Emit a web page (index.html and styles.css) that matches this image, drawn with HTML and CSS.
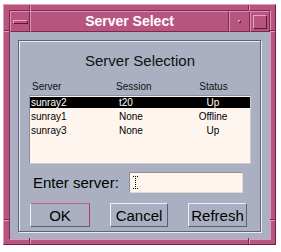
FILE: index.html
```html
<!DOCTYPE html>
<html lang="en">
<head>
    <meta charset="UTF-8">
    <title>Server Select</title>
    <link rel="stylesheet" href="styles.css">
</head>
<body>
    <!-- Janela -->
    <div class="window">
        <span class="mark mark-top mark-l"></span>
        <span class="mark mark-top mark-r"></span>
        <span class="mark mark-bottom mark-l"></span>
        <span class="mark mark-bottom mark-r"></span>
        <span class="mark mark-side mark-upper side-l"></span>
        <span class="mark mark-side mark-upper side-r"></span>
        <span class="mark mark-side mark-lower side-l"></span>
        <span class="mark mark-side mark-lower side-r"></span>

        <div class="inner">
            <div class="titlebar">
                <div class="tb-btn menu-btn"><span class="menu-icon"></span></div>
                <div class="tb-title">Server Select</div>
                <div class="tb-btn min-btn"><span class="min-icon"></span></div>
                <div class="tb-btn max-btn"><span class="max-icon"></span></div>
            </div>

            <div class="client">
                <div class="panel">
                    <div class="panel-title">Server Selection</div>

                    <div class="cols">
                        <span>Server</span>
                        <span>Session</span>
                        <span class="status">Status</span>
                    </div>

                    <div class="list">
                        <div class="row selected">
                            <span>sunray2</span>
                            <span class="session">t20</span>
                            <span class="status">Up</span>
                        </div>
                        <div class="row">
                            <span>sunray1</span>
                            <span class="session">None</span>
                            <span class="status">Offline</span>
                        </div>
                        <div class="row">
                            <span>sunray3</span>
                            <span class="session">None</span>
                            <span class="status">Up</span>
                        </div>
                    </div>

                    <div class="entry">
                        <span class="entry-label">Enter server:</span>
                        <div class="field">
                            <svg class="caret" width="5" height="13" viewBox="0 0 5 13">
                                <path d="M0 0.5h5M0 12.5h5M2.5 0v13" stroke="#000" stroke-width="1" stroke-dasharray="1 1" fill="none"/>
                            </svg>
                        </div>
                    </div>

                    <div class="buttons">
                        <button class="btn btn-ok">OK</button>
                        <button class="btn btn-cancel">Cancel</button>
                        <button class="btn btn-refresh">Refresh</button>
                    </div>
                </div>
            </div>
        </div>
    </div>
</body>
</html>
```

FILE: styles.css
```css
body {
    margin: 0;
    background: #fff;
    font-family: 'Liberation Sans', Arial, sans-serif;
}

.window {
    position: relative;
    margin: 4px 0 0 3px;
    width: 273px;
    height: 241px;
    box-sizing: border-box;
    padding: 5px 4px 4px 5px;
    background: #b8557f;
    border-top: 1px solid #e09abb;
    border-left: 1px solid #e09abb;
    border-bottom: 1px solid #6c1f45;
    border-right: 1px solid #6c1f45;
}

/* marcas de canto da moldura */
.mark {
    position: absolute;
}

.mark-top, .mark-bottom {
    width: 1px;
    height: 6px;
    border-left: 1px solid #7a2a52;
    background: #e09abb;
}

.mark-top { top: 0; }
.mark-bottom { bottom: 0; }
.mark-l { left: 25px; }
.mark-r { left: 244px; }

.mark-side {
    width: 5px;
    height: 1px;
    border-top: 1px solid #7a2a52;
    background: #e09abb;
}

.side-l { left: 0; }
.side-r { right: 0; }
.mark-upper { top: 25px; }
.mark-lower { top: 214px; }

.inner {
    border-top: 1px solid #7a2a52;
    border-left: 1px solid #7a2a52;
    border-bottom: 1px solid #e09abb;
    border-right: 1px solid #e09abb;
}

.titlebar {
    display: flex;
    height: 21px;
}

.tb-btn, .tb-title {
    box-sizing: border-box;
    border-top: 1px solid #dc8fb0;
    border-left: 1px solid #dc8fb0;
    border-bottom: 1px solid #7a2a52;
    border-right: 1px solid #7a2a52;
    background: #b8557f;
}

.tb-btn {
    display: flex;
    justify-content: center;
    align-items: center;
}

.menu-btn { width: 20px; }
.min-btn { width: 21px; }
.max-btn { width: 20px; }

.tb-title {
    flex: 1;
    color: #fff;
    font-size: 14px;
    font-weight: bold;
    text-align: center;
    line-height: 19px;
}

.menu-icon {
    width: 13px;
    height: 2px;
    background: #b8557f;
    border-top: 1px solid #e6a2c0;
    border-left: 1px solid #e6a2c0;
    border-bottom: 1px solid #5e1838;
    border-right: 1px solid #5e1838;
}

.min-icon {
    width: 1px;
    height: 1px;
    background: #b8557f;
    border-top: 1px solid #e6a2c0;
    border-left: 1px solid #e6a2c0;
    border-bottom: 1px solid #5e1838;
    border-right: 1px solid #5e1838;
}

.max-icon {
    width: 12px;
    height: 12px;
    background: #b8557f;
    border-top: 1px solid #e6a2c0;
    border-left: 1px solid #e6a2c0;
    border-bottom: 1px solid #5e1838;
    border-right: 1px solid #5e1838;
}

.client {
    height: 207px;
    box-sizing: border-box;
    padding: 8px 9px 7px 8px;
    background: #aab0c1;
}

.panel {
    height: 192px;
    box-sizing: border-box;
    padding: 11px 9px 4px 10px;
    border: 1px solid #5f6576;
    box-shadow: inset 1px 1px 0 #e8ebf2, 1px 1px 0 #e8ebf2;
}

.panel-title {
    font-size: 15px;
    line-height: 18px;
    text-align: center;
    color: #111;
}

.cols, .row {
    display: grid;
    grid-template-columns: 85px 60px 1fr;
    font-size: 10px;
}

.cols {
    margin-top: 11px;
    height: 12px;
    line-height: 12px;
    padding-left: 2px;
    color: #111;
}

.cols span:first-child {
    padding-left: 1px;
}

.status {
    text-align: center;
}

.list {
    margin-top: 2px;
    height: 69px;
    box-sizing: border-box;
    padding-top: 1px;
    display: flex;
    flex-direction: column;
    gap: 3px;
    background: #fff5ef;
    border-top: 1px solid #8c909c;
    border-left: 1px solid #8c909c;
    border-bottom: 1px solid #d6cbc2;
    border-right: 1px solid #d6cbc2;
}

.row {
    height: 11px;
    line-height: 11px;
    padding-left: 1px;
    color: #000;
}

.row .session {
    padding-left: 3px;
}

.row.selected {
    background: #000;
    color: #fff;
}

.entry {
    margin-top: 8px;
    display: flex;
    align-items: center;
}

.entry-label {
    padding-left: 4px;
    font-size: 15px;
    color: #000;
}

.field {
    margin-left: auto;
    margin-right: 8px;
    width: 114px;
    height: 21px;
    box-sizing: border-box;
    padding: 3px 0 0 3px;
    background: #fff5ef;
    border-top: 1px solid #8f8f8f;
    border-left: 1px solid #8f8f8f;
    border-bottom: 1px solid #e2d8cf;
    border-right: 1px solid #e2d8cf;
}

.caret {
    display: block;
}

.buttons {
    margin-top: 10px;
    padding-left: 1px;
    display: flex;
    gap: 20px;
}

.btn {
    height: 24px;
    padding: 0;
    font-family: 'Liberation Sans', Arial, sans-serif;
    font-size: 15px;
    color: #000;
    background: #aab0c1;
    border-top: 1px solid #edf0f6;
    border-left: 1px solid #edf0f6;
    border-bottom: 1px solid #5b6070;
    border-right: 1px solid #5b6070;
}

.btn-ok {
    width: 60px;
    border-top-color: #c8618e;
    border-right-color: #a8406e;
}

.btn-cancel { width: 58px; }
.btn-refresh { width: 59px; }
```
